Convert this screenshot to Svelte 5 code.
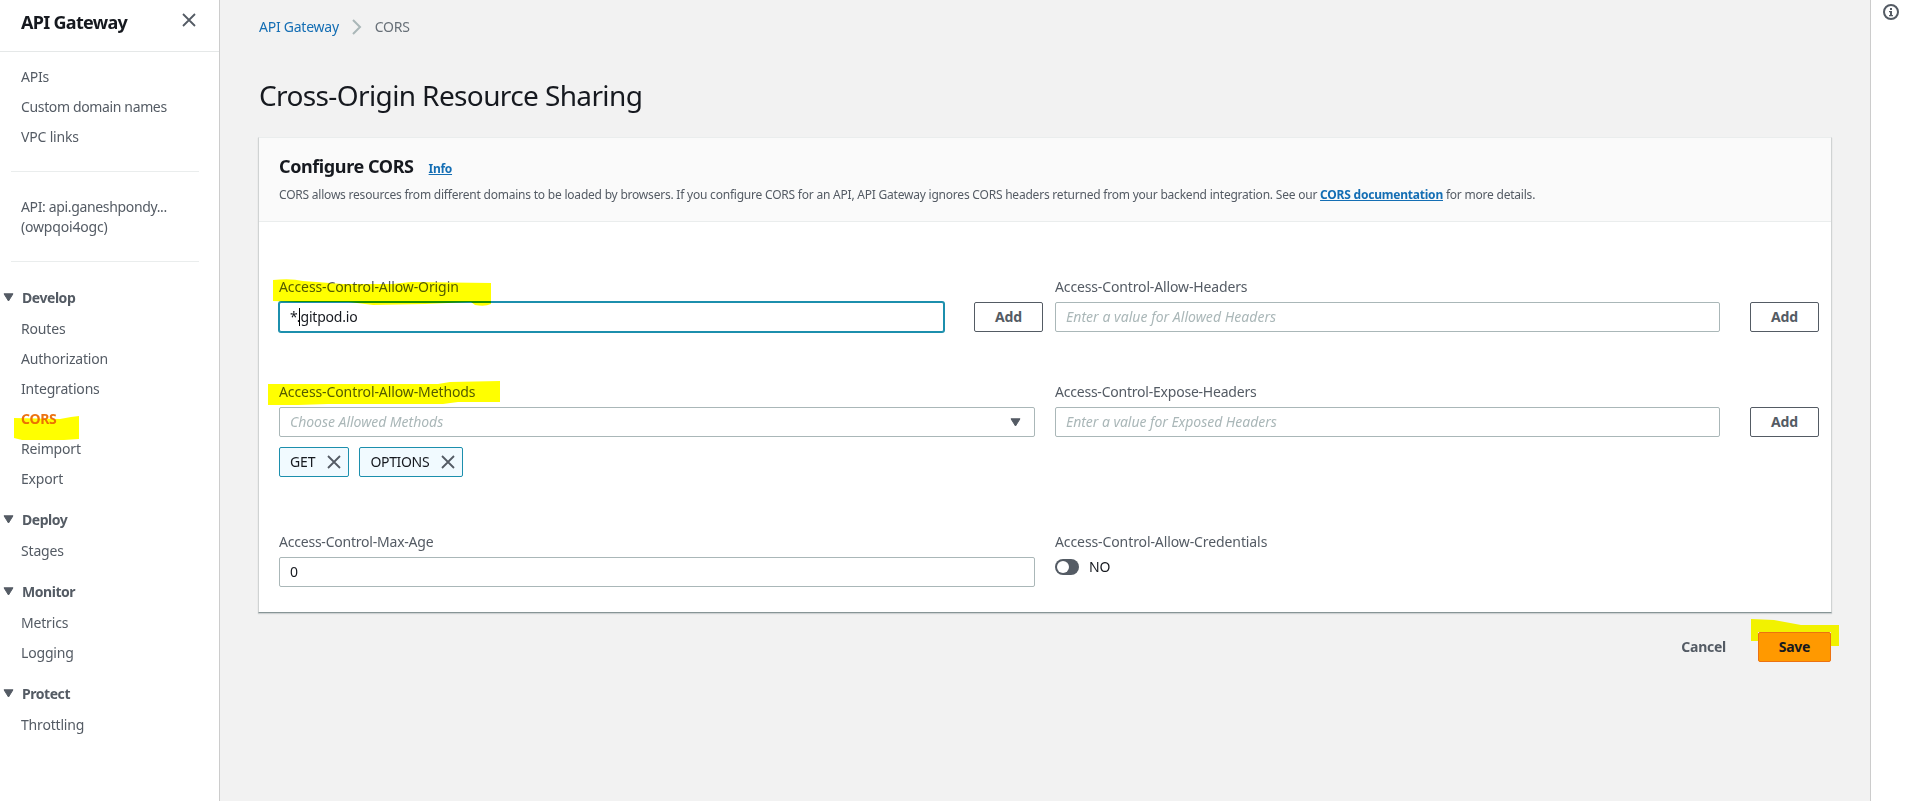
<script>
  const topLinks = ['APIs', 'Custom domain names', 'VPC links'];
  const sections = [
    { title: 'Develop', items: ['Routes', 'Authorization', 'Integrations', 'CORS', 'Reimport', 'Export'] },
    { title: 'Deploy', items: ['Stages'] },
    { title: 'Monitor', items: ['Metrics', 'Logging'] },
    { title: 'Protect', items: ['Throttling'] }
  ];
  const methods = ['GET', 'OPTIONS'];
</script>

{#snippet cross(size)}
  <svg class="cross" width={size} height={size} viewBox="0 0 14 14"><path d="M1 1l12 12M13 1L1 13" fill="none" stroke="#545b64" stroke-width="1.8" /></svg>
{/snippet}

{#snippet caret()}
  <svg width="11" height="9" viewBox="0 0 11 9"><path d="M1 .8h9L5.500 8z" fill="#545b64" stroke="#545b64" stroke-linejoin="round" /></svg>
{/snippet}

<div class="app">
  <nav class="side">
    <header><h2>API Gateway</h2>{@render cross(14)}</header>
    <ul class="top">
      {#each topLinks as link}<li>{link}</li>{/each}
    </ul>
    <div class="api"><span class="apiname">API: api.ganeshpondy...</span><br /><span>(owpqoi4ogc)</span></div>
    {#each sections as section}
      <section>
        <h3>{@render caret()}<span>{section.title}</span></h3>
        <ul>
          {#each section.items as item}
            <li class:active={item === 'CORS'}>
              <span>{item}</span>
              {#if item === 'CORS'}
                <svg class="mark nav-mark" width="66" height="25" viewBox="0 0 66 25"><path d="M0 2L46 3L57 1L65 0V23L50 24L8 24L0 22Z" fill="#ff0" /></svg>
              {/if}
            </li>
          {/each}
        </ul>
      </section>
    {/each}
  </nav>

  <main>
    <div class="crumbs">
      <a href="#gateway">API Gateway</a>
      <svg width="10" height="16" viewBox="0 0 10 16"><path d="M1 1l7 7-7 7" fill="none" stroke="#aab7b8" stroke-width="2" /></svg>
      <span>CORS</span>
    </div>
    <h1>Cross-Origin Resource Sharing</h1>

    <div class="card">
      <div class="card-head">
        <div class="card-title"><h2>Configure CORS</h2><a href="#info">Info</a></div>
        <p>CORS allows resources from different domains to be loaded by browsers. If you configure CORS for an API, API Gateway ignores CORS headers returned from your backend integration. See our <a href="#docs">CORS documentation</a> for more details.</p>
      </div>
      <div class="form">
        <div class="field">
          <div class="label origin"><span>Access-Control-Allow-Origin</span>
            <svg class="mark origin-mark" width="220" height="28" viewBox="0 0 220 28"><path d="M0 1Q18 -1 30 2L70 5L120 5L138 3L218 4V25Q212 28 202 26L198 23L152 25L100 26L76 23L24 23L0 22Z" fill="#ff0" /></svg>
          </div>
          <div class="control">
            <div class="input focus"><span class="before">*.</span><i class="cursor"></i><span>gitpod.io</span></div>
            <button class="add">Add</button>
          </div>
        </div>
        <div class="field">
          <div class="label"><span>Access-Control-Allow-Headers</span></div>
          <div class="control">
            <div class="input placeholder">Enter a value for Allowed Headers</div>
            <button class="add">Add</button>
          </div>
        </div>
        <div class="field">
          <div class="label origin"><span>Access-Control-Allow-Methods</span>
            <svg class="mark methods-mark" width="233" height="25" viewBox="0 0 233 25"><path d="M0 3L170 3L182 1L232 0V21L190 21L175 23L60 23L30 24L0 24Z" fill="#ff0" /></svg>
          </div>
          <div class="control">
            <div class="input placeholder select"><span>Choose Allowed Methods</span>{@render caret()}</div>
          </div>
          <div class="tokens">
            {#each methods as method}<div class="token"><span>{method}</span>{@render cross(14)}</div>{/each}
          </div>
        </div>
        <div class="field">
          <div class="label expose"><span>Access-Control-Expose-Headers</span></div>
          <div class="control">
            <div class="input placeholder exposed">Enter a value for Exposed Headers</div>
            <button class="add">Add</button>
          </div>
        </div>
        <div class="field">
          <div class="label expose"><span>Access-Control-Max-Age</span></div>
          <div class="control"><div class="input full">0</div></div>
        </div>
        <div class="field">
          <div class="label origin"><span>Access-Control-Allow-Credentials</span></div>
          <div class="toggle"><i></i><span>NO</span></div>
        </div>
      </div>
    </div>

    <div class="actions">
      <button class="cancel">Cancel</button>
      <button class="save">Save
        <svg class="mark save-mark" width="89" height="28" viewBox="0 0 89 28"><path d="M0 0L23 1L50 6L88 6V27H80V13H7V22H0Z" fill="#ff0" /></svg>
      </button>
    </div>
  </main>

  <aside>
    <svg width="16" height="16" viewBox="0 0 16 16"><circle cx="8" cy="8" r="7" fill="none" stroke="#545b64" stroke-width="2" /><path d="M7 4h2v2H7zM6 7h3v4h1v1.200H6V11h1V8.200H6z" fill="#545b64" /></svg>
  </aside>
</div>

<style>
  :global(body) { margin: 0; overflow: hidden; }
  * { box-sizing: border-box; }
  .app { display: flex; height: 801px; background: #f2f2f2; color: #16191f; font: 14px/20px "Noto Sans", "Open Sans", sans-serif; letter-spacing: -0.1px; }
  ul, h1, h2, h3, p { margin: 0; padding: 0; list-style: none; }
  svg { display: block; flex: none; }
  button { font: inherit; letter-spacing: -0.25px; padding: 0; position: relative; }

  .side { width: 220px; flex: none; background: #fff; border-right: 1px solid #ccc; color: #545b64; letter-spacing: -0.18px; }
  .side header { height: 52px; border-bottom: 1px solid #e5e8e8; display: flex; justify-content: space-between; padding: 13px 23px 0 21px; }
  .side h2 { font-size: 18px; line-height: 18px; font-weight: 700; color: #16191f; letter-spacing: -0.7px; }
  .side .top { padding: 10px 0 19px; }
  .side .top li:nth-child(2) { letter-spacing: -0.36px; }
  .side li { height: 30px; line-height: 30px; padding-left: 21px; position: relative; }
  .side li.active { color: #ec7211; font-weight: 700; letter-spacing: -0.3px; }
  .api { margin: 0 20px 0 11px; height: 91px; padding: 25px 0 0 10px; border-top: 1px solid #eaeded; border-bottom: 1px solid #eaeded; white-space: nowrap; }
  .apiname { letter-spacing: -0.35px; }
  .side section { padding-top: 15px; }
  .api + section { padding-top: 25px; }
  .side h3 { height: 21px; line-height: 21px; font-size: 14px; font-weight: 700; letter-spacing: -0.45px; display: flex; align-items: center; gap: 8px; padding: 0 0 0 3px; }
  .side section ul { padding-top: 6px; }
  .mark { position: absolute; mix-blend-mode: multiply; pointer-events: none; }
  .nav-mark { left: 14px; top: 12px; }

  main { flex: 1; padding: 16px 38px 0 38px; min-width: 0; }
  .crumbs { display: flex; align-items: center; height: 22px; gap: 13px; padding-left: 1px; color: #687078; letter-spacing: -0.25px; }
  a { color: #146eb4; text-decoration: none; }
  h1 { font-size: 28px; line-height: 36px; font-weight: 400; margin: 39px 0 24px 1px; letter-spacing: -0.62px; white-space: nowrap; }
  .card { height: 476px; background: #fff; border: 1px solid #d0d3d3; border-top-color: #eaeded; border-bottom: 1px solid #879596; box-shadow: 0 1px 1px rgba(0, 28, 36, .15); }
  .card-head { height: 84px; background: #fafafa; border-bottom: 1px solid #eaeded; padding: 16px 20px 0; }
  .card-title { display: flex; align-items: baseline; gap: 15px; height: 24px; }
  .card-title h2 { font-size: 18px; line-height: 24px; letter-spacing: -0.4px; }
  .card-title a { font-size: 12px; font-weight: 700; text-decoration: underline; letter-spacing: -0.3px; }
  .card p { font-size: 12px; line-height: 18px; margin-top: 8px; color: #545b64; white-space: nowrap; letter-spacing: -0.215px; }
  .card p a { font-weight: 700; text-decoration: underline; }

  .form { display: grid; grid-template-columns: 756px 764px; column-gap: 20px; grid-template-rows: 105px 150px 80px; padding: 55px 0 0 20px; }
  .label { height: 20px; color: #545b64; position: relative; letter-spacing: -0.14px; }
  .label.origin { letter-spacing: -0.1px; }
  .label.expose { letter-spacing: -0.22px; }
  .control { display: flex; justify-content: space-between; margin-top: 5px; width: 764px; }
  .input { width: 665px; height: 30px; border: 1px solid #aab7b8; border-radius: 2px; background: #fff; padding: 0 10px; line-height: 28px; white-space: nowrap; }
  .input.full, .input.select { width: 756px; }
  .input.focus { display: flex; align-items: center; border-color: #1c8fad; box-shadow: 0 0 0 1px #1c8fad; letter-spacing: -0.2px; }
  .before { letter-spacing: -1px; }
  .placeholder { color: #aab7b8; font-style: italic; letter-spacing: 0.04px; }
  .placeholder.exposed { letter-spacing: -0.04px; }
  .select { display: flex; align-items: center; justify-content: space-between; padding-right: 13px; letter-spacing: -0.03px; }
  .cursor { width: 1px; height: 18px; background: #000; }
  .add { width: 69px; height: 30px; border: 1px solid #545b64; border-radius: 2px; background: #fff; color: #545b64; font-weight: 700; letter-spacing: -0.1px; }
  .tokens { display: flex; gap: 10px; margin-top: 10px; }
  .token { height: 30px; display: flex; align-items: center; gap: 12px; border: 1px solid #1c8fad; background: #f1faff; border-radius: 2px; padding: 0 7px 0 10px; }
  .token:last-child { letter-spacing: -0.35px; }
  .toggle { display: flex; align-items: center; gap: 10px; margin-top: 5px; height: 20px; }
  .toggle i { width: 24px; height: 16px; border-radius: 8px; background: #545b64; padding: 2px; }
  .toggle i::before { content: ""; display: block; width: 12px; height: 12px; border-radius: 6px; background: #fff; }
  .origin-mark { left: -6px; top: 2px; }
  .methods-mark { left: -11px; top: -1px; }

  .actions { display: flex; justify-content: flex-end; margin-top: 19px; padding-right: 1px; height: 30px; gap: 32px; }
  .cancel { border: 0; background: none; color: #545b64; font-weight: 700; }
  .save { width: 73px; border: 1px solid #ec7211; border-radius: 2px; background: #f90; color: #16191f; font-weight: 700; }
  .save-mark { left: -8px; top: -14px; }

  aside { width: 40px; flex: none; background: #fff; border-left: 1px solid #ccc; padding: 4px 0 0 12px; }
</style>
